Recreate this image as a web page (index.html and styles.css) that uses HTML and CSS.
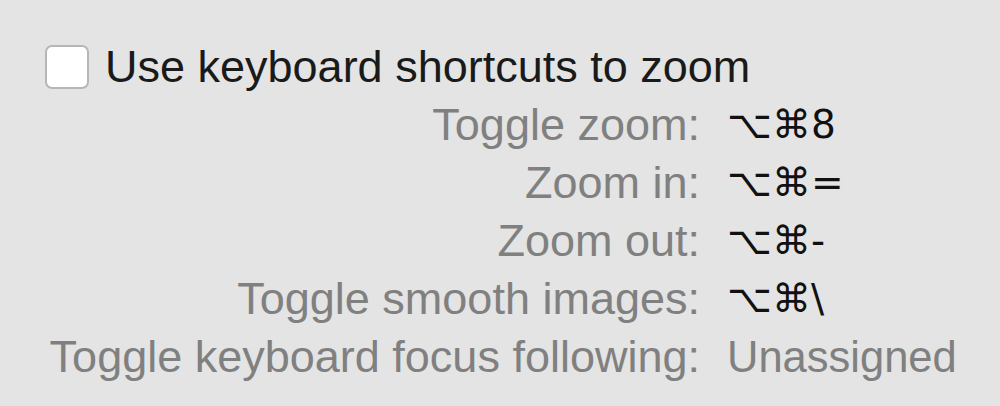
FILE: index.html
```html
<!DOCTYPE html>
<html>
<head>
<meta charset="utf-8">
<link rel="stylesheet" href="styles.css">
</head>
<body>
<div class="panel">
  <label class="check-row">
    <span class="checkbox"></span>
    <span class="check-label">Use keyboard shortcuts to zoom</span>
  </label>
  <div class="shortcuts">
    <div class="label">Toggle zoom:</div><div class="value keys">⌥⌘8</div>
    <div class="label">Zoom in:</div><div class="value keys">⌥⌘=</div>
    <div class="label">Zoom out:</div><div class="value keys">⌥⌘-</div>
    <div class="label">Toggle smooth images:</div><div class="value keys">⌥⌘\</div>
    <div class="label">Toggle keyboard focus following:</div><div class="value unassigned">Unassigned</div>
  </div>
</div>
</body>
</html>
```
FILE: styles.css
```css
html, body {
  margin: 0;
  padding: 0;
  background: #e3e4e3;
}
body {
  width: 1000px;
  height: 406px;
  overflow: hidden;
  font-family: "Liberation Sans", Arial, sans-serif;
}
.panel {
  padding-top: 38px;
}
.check-row {
  display: flex;
  align-items: center;
  height: 58px;
  padding-left: 45px;
  gap: 16px;
}
.checkbox {
  width: 44px;
  height: 44px;
  box-sizing: border-box;
  background: #ffffff;
  border: 2px solid #b5b6b5;
  border-radius: 7px;
  flex: none;
}
.check-label {
  font-size: 45px;
  line-height: 58px;
  color: #1a1a1a;
}
.shortcuts {
  display: grid;
  grid-template-columns: 700px auto;
  column-gap: 27px;
  font-size: 45px;
  line-height: 58px;
}
.label {
  text-align: right;
  color: #808080;
  white-space: nowrap;
}
.value {
  white-space: nowrap;
}
.keys {
  color: #111111;
  font-family: "DejaVu Sans", sans-serif;
  font-size: 39px;
}
.unassigned {
  color: #808080;
  font-size: 43.5px;
}
```
